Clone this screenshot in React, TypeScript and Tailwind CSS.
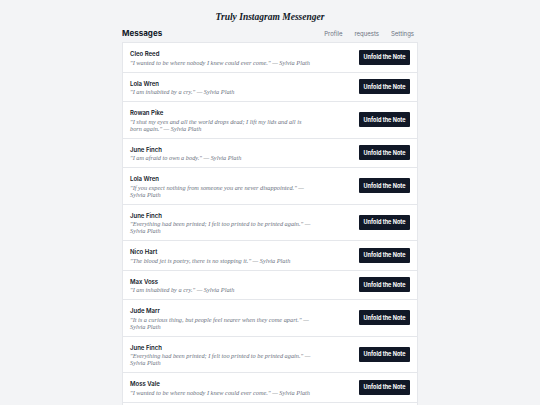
const notes = [
  { name: "Cleo Reed", quote: "I wanted to be where nobody I knew could ever come." },
  { name: "Lola Wren", quote: "I am inhabited by a cry." },
  { name: "Rowan Pike", quote: "I shut my eyes and all the world drops dead; I lift my lids and all is born again." },
  { name: "June Finch", quote: "I am afraid to own a body." },
  { name: "Lola Wren", quote: "If you expect nothing from someone you are never disappointed." },
  { name: "June Finch", quote: "Everything had been printed; I felt too printed to be printed again." },
  { name: "Nico Hart", quote: "The blood jet is poetry, there is no stopping it." },
  { name: "Max Voss", quote: "I am inhabited by a cry." },
  { name: "Jude Marr", quote: "It is a curious thing, but people feel nearer when they come apart." },
  { name: "June Finch", quote: "Everything had been printed; I felt too printed to be printed again." },
  { name: "Moss Vale", quote: "I wanted to be where nobody I knew could ever come." },
  { name: "Cleo Reed", quote: "I am afraid to own a body." },
]

export default function App() {
  return (
    <div className="min-h-screen bg-[#f3f4f6] font-['Inter',sans-serif]">
      <div className="mx-auto w-[296px] pt-[10px]">
        {/* Title */}
        <h1 className="text-center font-['Liberation_Serif',serif] text-[9.5px] font-bold italic leading-[14px] text-[#111827]">
          Truly Instagram Messenger
        </h1>
        {/* Header */}
        <div className="mt-[3px] flex items-center justify-between">
          <h2 className="text-[8px] font-bold leading-[12px] text-[#111827]">Messages</h2>
          <nav className="flex gap-[12px] pr-[4px] text-[6px] text-[#6b7280]">
            <a>Profile</a>
            <a>requests</a>
            <a>Settings</a>
          </nav>
        </div>
        {/* List */}
        <ul className="mt-[3px] border border-[#e5e7eb] bg-white">
          {notes.map((n, i) => (
            <li
              key={i}
              className="flex items-center justify-between border-b border-[#e5e7eb] py-[6px] pl-[7px] pr-[7px]"
            >
              <div className="w-[182px]">
                <div className="text-[6px] font-semibold leading-[9.5px] text-[#111827]">{n.name}</div>
                <p className="font-['Liberation_Serif',serif] text-[6.3px] italic leading-[7px] text-[#6b7280]">
                  "{n.quote}" — Sylvia Plath
                </p>
              </div>
              <button className="h-[15px] w-[51px] rounded-[1px] bg-[#111827] text-[5.5px] font-bold text-white">
                Unfold the Note
              </button>
            </li>
          ))}
        </ul>
      </div>
    </div>
  )
}
